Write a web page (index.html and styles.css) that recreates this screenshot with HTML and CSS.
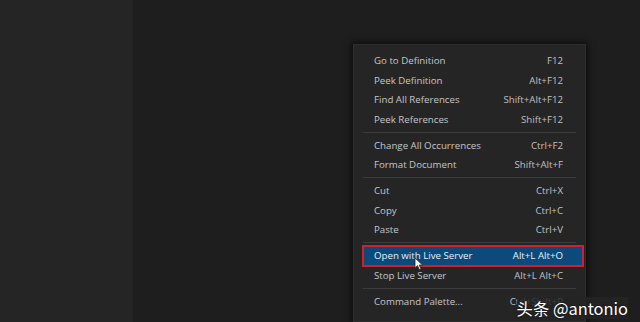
FILE: index.html
```html
<!DOCTYPE html>
<html lang="en">
<head>
  <meta charset="UTF-8" />
  <title>Editor context menu</title>
  <link rel="stylesheet" href="styles.css">
</head>
<body>
  <div class="sidebar"></div>
  <div class="editor">
    <!-- context menu -->
    <div class="menu">
      <div class="item"><span>Go to Definition</span><span class="key">F12</span></div>
      <div class="item"><span>Peek Definition</span><span class="key">Alt+F12</span></div>
      <div class="item"><span>Find All References</span><span class="key">Shift+Alt+F12</span></div>
      <div class="item"><span>Peek References</span><span class="key">Shift+F12</span></div>
      <div class="sep"></div>
      <div class="item"><span>Change All Occurrences</span><span class="key">Ctrl+F2</span></div>
      <div class="item"><span>Format Document</span><span class="key">Shift+Alt+F</span></div>
      <div class="sep"></div>
      <div class="item"><span>Cut</span><span class="key">Ctrl+X</span></div>
      <div class="item"><span>Copy</span><span class="key">Ctrl+C</span></div>
      <div class="item"><span>Paste</span><span class="key">Ctrl+V</span></div>
      <div class="sep"></div>
      <div class="item active">
        <span>Open with Live Server</span><span class="key">Alt+L Alt+O</span>
        <svg class="cursor" width="10" height="14" viewBox="0 0 10 14">
          <path d="M1 1 L1 11 L3.5 8.6 L5.4 12.8 L7 12.1 L5.2 8 L8.6 8 Z" fill="#fff" stroke="#222" stroke-width="0.8"/>
        </svg>
      </div>
      <div class="item"><span>Stop Live Server</span><span class="key">Alt+L Alt+C</span></div>
      <div class="sep"></div>
      <div class="item"><span>Command Palette...</span><span class="key">Ctrl+Shift+P</span></div>
    </div>
  </div>
  <div class="watermark">头条 @antonio</div>
</body>
</html>
```

FILE: styles.css
```css
html, body {
  margin: 0;
  height: 100%;
}
body {
  display: flex;
  background: #1e1e1e;
  font-family: "Open Sans", "Noto Sans", sans-serif;
  overflow: hidden;
  position: relative;
}
.sidebar {
  width: 132px;
  background: #252525;
  border-right: 1px solid #222;
}
.editor {
  flex: 1;
  padding: 44px 0 0 220px;
}
.menu {
  width: 213px;
  background: #252526;
  border: 1px solid #2e2e2f;
  box-shadow: 0 0 6px 2px rgba(0, 0, 0, 0.55);
  padding: 6px 9px 10px;
}
.item {
  display: flex;
  justify-content: space-between;
  align-items: center;
  height: 19.5px;
  padding: 0 13px 0 11px;
  font-size: 9.7px;
  color: #c6c6c6;
  position: relative;
}
.item .key {
  color: #c0c0c0;
}
.item.active {
  background: #0b4a7a;
  color: #e8eef4;
  border: 2px solid #d1202c;
  height: 18px;
  margin: -1.25px -8px -1.25px -1px;
  padding: 0 19px 0 10px;
}
.item.active .key {
  color: #e8eef4;
}
.cursor {
  position: absolute;
  left: 50px;
  top: 10px;
}
.sep {
  height: 1px;
  background: #3c3c3c;
  margin: 2.75px 0;
}
.watermark {
  position: absolute;
  right: 12px;
  bottom: 3px;
  font-family: "Noto Sans CJK SC", "Noto Sans", sans-serif;
  font-size: 16.4px;
  line-height: 22px;
  color: #fff;
  text-shadow: 0 0 2px rgba(0, 0, 0, 0.6);
  background: rgba(37, 37, 38, 0.85);
}
```
